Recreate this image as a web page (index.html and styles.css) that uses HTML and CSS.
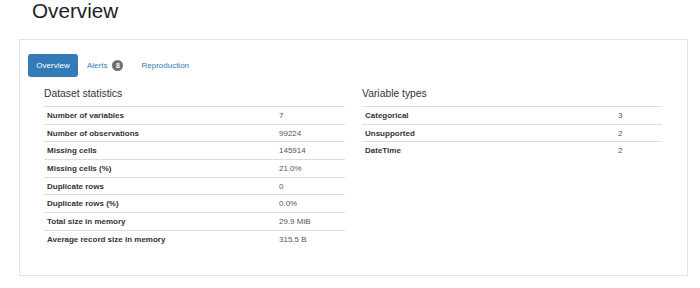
FILE: index.html
```html
<!DOCTYPE html>
<html>
<head>
<meta charset="utf-8">
<link rel="stylesheet" href="styles.css">
</head>
<body>
<h1 class="title">Overview</h1>
<div class="panel">
  <ul class="tabs">
    <li class="tab active">Overview</li>
    <li class="tab alerts">Alerts <span class="badge">8</span></li>
    <li class="tab">Reproduction</li>
  </ul>
  <div class="columns">
    <div class="col">
      <h4 class="heading">Dataset statistics</h4>
      <table class="stats left">
        <colgroup><col class="c1"><col class="c2"></colgroup>
        <tr><th>Number of variables</th><td>7</td></tr>
        <tr><th>Number of observations</th><td>99224</td></tr>
        <tr><th>Missing cells</th><td>145914</td></tr>
        <tr><th>Missing cells (%)</th><td>21.0%</td></tr>
        <tr><th>Duplicate rows</th><td>0</td></tr>
        <tr><th>Duplicate rows (%)</th><td>0.0%</td></tr>
        <tr><th>Total size in memory</th><td>29.9 MiB</td></tr>
        <tr><th>Average record size in memory</th><td>315.5 B</td></tr>
      </table>
    </div>
    <div class="col">
      <h4 class="heading">Variable types</h4>
      <table class="stats right">
        <colgroup><col class="c1"><col class="c2"></colgroup>
        <tr><th>Categorical</th><td>3</td></tr>
        <tr><th>Unsupported</th><td>2</td></tr>
        <tr><th>DateTime</th><td>2</td></tr>
      </table>
    </div>
  </div>
</div>
</body>
</html>
```

FILE: styles.css
```css
html, body {
  margin: 0;
  padding: 0;
  background: #fff;
}
body {
  font-family: "Liberation Sans", Arial, sans-serif;
  font-size: 8px;
  color: #333;
}
.title {
  margin: 0;
  padding-left: 32px;
  font-size: 20.7px;
  line-height: 21px;
  font-weight: normal;
  color: #222;
}
.panel {
  box-sizing: border-box;
  margin: 18px 0 0 19px;
  width: 669px;
  height: 237px;
  border: 1px solid #e3e3e3;
  padding: 14px 8px 0 8px;
}
.tabs {
  list-style: none;
  margin: 0;
  padding: 0;
  display: flex;
  gap: 1px;
  height: 23px;
}
.tab {
  padding: 0 8px;
  line-height: 23px;
  color: #337ab7;
  border-radius: 3px;
  display: flex;
  align-items: center;
}
.tab.alerts {
  padding-right: 9px;
}
.tab.active {
  background: #337ab7;
  color: #fff;
  width: 50px;
  box-sizing: border-box;
  justify-content: center;
}
.badge {
  display: inline-flex;
  align-items: center;
  justify-content: center;
  width: 11px;
  height: 11px;
  margin-left: 5px;
  border-radius: 6px;
  background: #6f6f6f;
  color: #fff;
  font-size: 7px;
  font-weight: bold;
  line-height: 11px;
}
.columns {
  display: grid;
  grid-template-columns: 301px 300px;
  column-gap: 17px;
  margin: 11px 0 0 16px;
}
.heading {
  margin: 0 0 6px 0;
  font-size: 10.35px;
  line-height: 12px;
  font-weight: normal;
  color: #333;
}
.stats {
  width: 100%;
  border-collapse: collapse;
  table-layout: fixed;
}
.stats th, .stats td {
  border-top: 1px solid #ddd;
  padding: 2.85px 3px;
  line-height: 11px;
  text-align: left;
  white-space: nowrap;
}
.stats th {
  font-weight: bold;
  color: #333;
}
.stats td {
  color: #555;
}
.left .c1 { width: 232px; }
.left .c2 { width: 69px; }
.right .c1 { width: 253px; }
.right .c2 { width: 47px; }
```
